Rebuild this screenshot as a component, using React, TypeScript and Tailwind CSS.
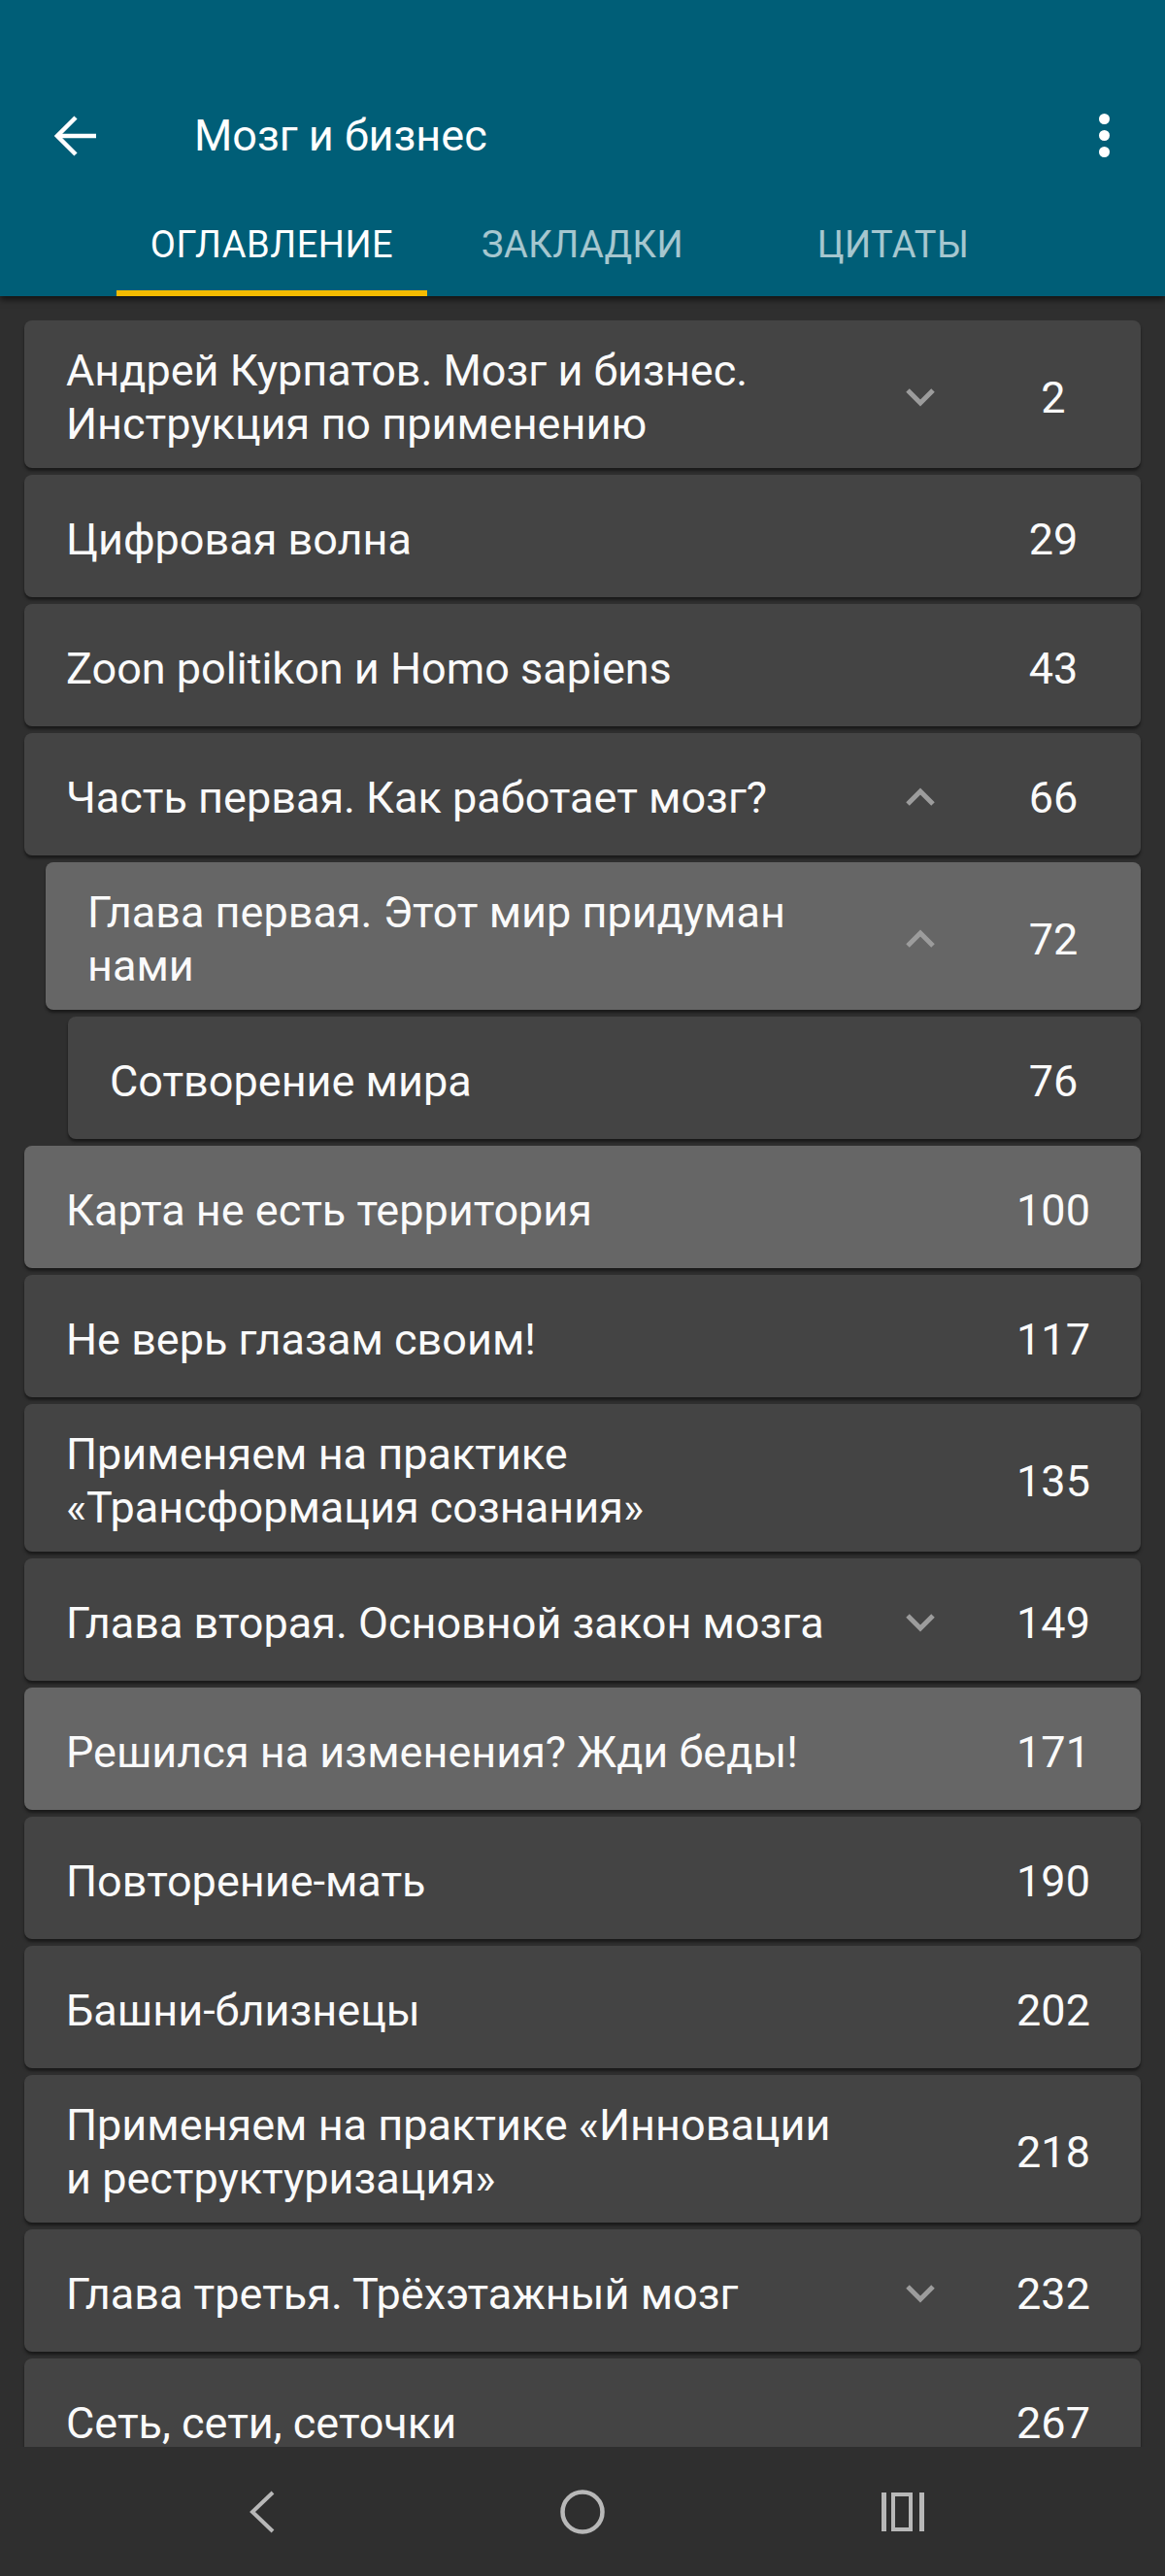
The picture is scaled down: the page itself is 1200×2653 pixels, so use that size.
import React from "react";

type Entry = {
  title: string;
  page: number;
  level?: number;
  chevron?: "up" | "down";
  active?: boolean;
};

const entries: Entry[] = [
  { title: "Андрей Курпатов. Мозг и бизнес. Инструкция по применению", page: 2, chevron: "down" },
  { title: "Цифровая волна", page: 29 },
  { title: "Zoon politikon и Homo sapiens", page: 43 },
  { title: "Часть первая. Как работает мозг?", page: 66, chevron: "up" },
  { title: "Глава первая. Этот мир придуман нами", page: 72, level: 1, chevron: "up", active: true },
  { title: "Сотворение мира", page: 76, level: 2 },
  { title: "Карта не есть территория", page: 100, active: true },
  { title: "Не верь глазам своим!", page: 117 },
  { title: "Применяем на практике «Трансформация сознания»", page: 135 },
  { title: "Глава вторая. Основной закон мозга", page: 149, chevron: "down" },
  { title: "Решился на изменения? Жди беды!", page: 171, active: true },
  { title: "Повторение-мать", page: 190 },
  { title: "Башни-близнецы", page: 202 },
  { title: "Применяем на практике «Инновации и реструктуризация»", page: 218 },
  { title: "Глава третья. Трёхэтажный мозг", page: 232, chevron: "down" },
  { title: "Сеть, сети, сеточки", page: 267 },
];

function Chevron({ dir }: { dir: "up" | "down" }) {
  return (
    <svg width="32" height="20" viewBox="0 0 32 20" fill="none" stroke="#9c9c9c" strokeWidth={5}>
      {dir === "down" ? <polyline points="3,3 16,16 29,3" /> : <polyline points="3,17 16,4 29,17" />}
    </svg>
  );
}

function Row({ entry }: { entry: Entry }) {
  const indent = entry.level === 2 ? "ml-[45px]" : entry.level === 1 ? "ml-[22px]" : "";
  return (
    <div
      className={`${indent} flex min-h-[126px] shrink-0 items-center rounded-[8px] pt-[24px] pb-[18px] pl-[43px] pr-[40px] shadow-[0_3px_3px_rgba(0,0,0,0.45)] ${
        entry.active ? "bg-[#666666]" : "bg-[#444444]"
      }`}
    >
      <div className="flex-1 pr-[30px] text-[45px] leading-[55px] text-[#fafafa]">{entry.title}</div>
      <div className="flex w-[96px] justify-center">{entry.chevron && <Chevron dir={entry.chevron} />}</div>
      <div className="ml-[39px] w-[100px] text-center text-[45px] leading-[55px] text-[#fafafa]">{entry.page}</div>
    </div>
  );
}

export default function App() {
  return (
    <div className="flex h-[2653px] w-[1200px] flex-col overflow-hidden bg-[#2f2f2f] font-['Roboto',sans-serif]">
      {/* App bar */}
      <div className="relative z-10 flex h-[305px] shrink-0 flex-col bg-[#005e77] shadow-[0_4px_6px_rgba(0,0,0,0.55)]">
        <div className="h-[68px]" />
        <div className="flex h-[143px] items-center">
          <svg className="ml-[56px]" width="44" height="44" viewBox="0 0 44 44" fill="none" stroke="#fff" strokeWidth={4.5}>
            <line x1="3" y1="22" x2="43" y2="22" />
            <polyline points="22,3 3,22 22,41" />
          </svg>
          <div className="ml-[100px] text-[45px] leading-[55px] text-white">Мозг и бизнес</div>
          <div className="ml-auto mr-[57px] flex flex-col gap-[6px]">
            <span className="h-[11px] w-[11px] rounded-full bg-white" />
            <span className="h-[11px] w-[11px] rounded-full bg-white" />
            <span className="h-[11px] w-[11px] rounded-full bg-white" />
          </div>
        </div>
        <div className="flex flex-1 px-[120px]">
          {["ОГЛАВЛЕНИЕ", "ЗАКЛАДКИ", "ЦИТАТЫ"].map((t, i) => (
            <div key={t} className="flex w-[320px] flex-col items-center">
              <div
                className={`mt-[21px] text-[38px] leading-[40px] tracking-[0.5px] ${
                  i === 0 ? "text-white" : "text-white/65"
                }`}
              >
                {t}
              </div>
              <div className={`mt-auto h-[6px] w-full ${i === 0 ? "bg-[#f4bb00]" : ""}`} />
            </div>
          ))}
        </div>
      </div>

      {/* Table of contents */}
      <div className="flex min-h-0 flex-1 flex-col gap-[7px] overflow-hidden px-[25px] pt-[25px]">
        {entries.map((e) => (
          <Row key={e.page} entry={e} />
        ))}
      </div>

      {/* System navigation */}
      <div className="flex h-[133px] shrink-0 items-center justify-center bg-[#2f2f2f]">
        <div className="flex w-[330px] justify-center">
          <svg width="28" height="44" viewBox="0 0 28 44" fill="none" stroke="#b8b8b8" strokeWidth={4}>
            <polyline points="25,2 4,22 25,42" />
          </svg>
        </div>
        <div className="flex w-[330px] justify-center">
          <svg width="48" height="48" viewBox="0 0 48 48" fill="none" stroke="#b8b8b8" strokeWidth={4.5}>
            <circle cx="24" cy="24" r="20.5" />
          </svg>
        </div>
        <div className="flex w-[330px] justify-center">
          <svg width="44" height="40" viewBox="0 0 44 40" fill="#b8b8b8">
            <rect x="0" y="0" width="5" height="40" />
            <rect x="12" y="2" width="18" height="36" fill="none" stroke="#b8b8b8" strokeWidth={4} />
            <rect x="39" y="0" width="5" height="40" />
          </svg>
        </div>
      </div>
    </div>
  );
}
